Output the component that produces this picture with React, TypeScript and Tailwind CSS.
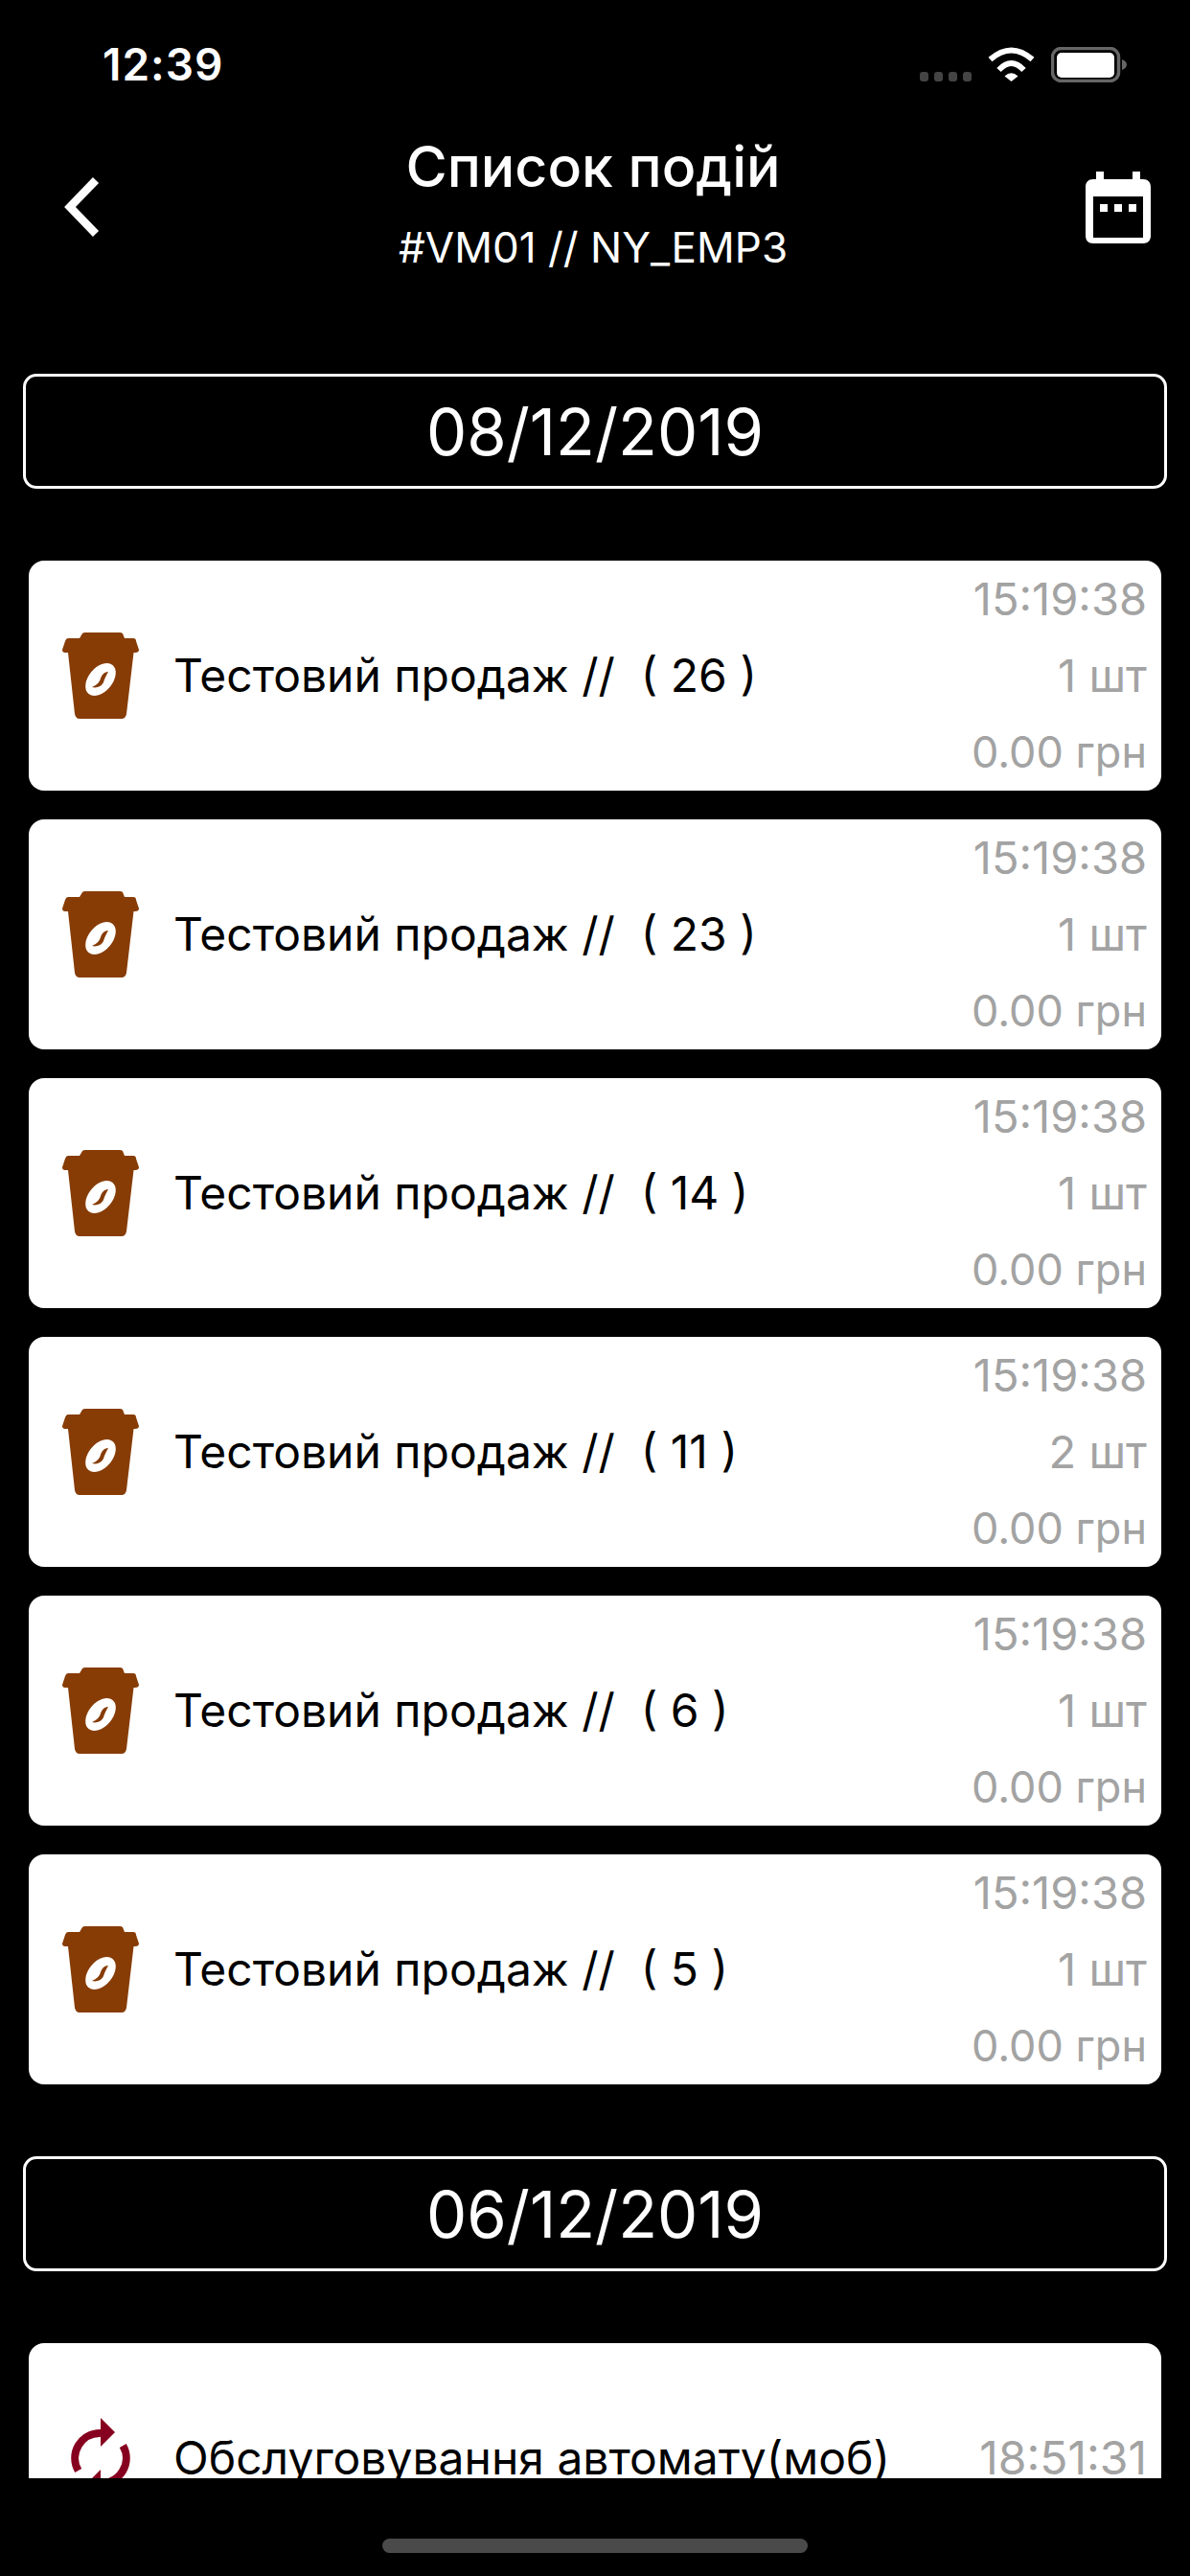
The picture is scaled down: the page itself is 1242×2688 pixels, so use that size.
const font = "font-['Inter','Noto_Sans',sans-serif]";

type Sale = { id: number; qty: number };

const sales: Sale[] = [
  { id: 26, qty: 1 },
  { id: 23, qty: 1 },
  { id: 14, qty: 1 },
  { id: 11, qty: 2 },
  { id: 6, qty: 1 },
  { id: 5, qty: 1 },
];

function WifiIcon() {
  return (
    <svg width="49" height="36" viewBox="0 0 49 36" fill="none">
      <path d="M2.5 13 Q24.5 -6 46.5 13" stroke="white" strokeWidth="6" />
      <path d="M11.5 24 Q24.5 10 37.5 24" stroke="white" strokeWidth="6" />
      <path d="M17.5 30.5 Q24.5 24 31.5 30.5 L24.5 36 Z" fill="white" />
    </svg>
  );
}

function BatteryIcon() {
  return (
    <svg width="80" height="37" viewBox="0 0 80 37" fill="none">
      <rect x="1.5" y="1.5" width="69" height="34" rx="9" stroke="#666666" strokeWidth="3.5" />
      <rect x="6" y="6" width="60" height="26" rx="5" fill="white" />
      <path d="M74 13 C77 14 79 16 79 18.5 C79 21 77 23 74 24 Z" fill="#666666" />
    </svg>
  );
}

function BackIcon() {
  return (
    <svg width="40" height="62" viewBox="0 0 40 62" fill="none">
      <path d="M35 3 L8 31 L35 59" stroke="white" strokeWidth="8.5" />
    </svg>
  );
}

function CalendarIcon() {
  return (
    <svg width="68" height="75" viewBox="0 0 68 75">
      <path
        fillRule="evenodd"
        fill="white"
        d="M11 0 H19 V8 H49 V0 H57 V8 H60 C65 8 68 11 68 16 V67 C68 72 65 75 60 75 H8 C3 75 0 72 0 67 V16 C0 11 3 8 8 8 H11 Z M8 26 V69 H60 V26 Z"
      />
      <rect x="15" y="34" width="8" height="8" fill="white" />
      <rect x="30" y="34" width="8" height="8" fill="white" />
      <rect x="45" y="34" width="8" height="8" fill="white" />
    </svg>
  );
}

function CupIcon() {
  return (
    <svg width="80" height="90" viewBox="0 0 80 90" className="shrink-0">
      <path
        fill="#873c06"
        d="M18 6 L21 1 Q22 0 24 0 H60 Q62 0 63 1 L65 6 H74 Q77 6 77 9 L80 18 Q80 21 76 21 H74.5 L67 85 Q66 90 62 90 H18 Q14 90 13 85 L6 21 H3 Q0 21 0 18 L3 9 Q4 6 6 6 Z"
      />
      <ellipse cx="40" cy="49" rx="19.5" ry="12.5" transform="rotate(-50 40 49)" fill="white" />
      <path
        fill="#873c06"
        d="M48 41 C43 41 41 45 40 48 C39 52 36 55 31 57 C36 58.5 41 56 43 52 C44 48 46 45 48 41 Z"
      />
    </svg>
  );
}

function ServiceIcon() {
  return (
    <svg width="80" height="90" viewBox="0 0 80 90" className="shrink-0" fill="none">
      <path d="M16.7 58 A26 26 0 0 1 40 19" stroke="#86001f" strokeWidth="8" />
      <path d="M40 3 L55 18 L40 33 Z" fill="#86001f" />
      <path d="M63.3 32 A26 26 0 0 1 40 71" stroke="#86001f" strokeWidth="8" />
      <path d="M40 87 L25 72 L40 57 Z" fill="#86001f" />
    </svg>
  );
}

function DateBox({ date }: { date: string }) {
  return (
    <div className="mx-[24px] flex h-[120px] items-center justify-center rounded-[14px] border-[3px] border-white text-[67px] leading-none text-white">
      {date}
    </div>
  );
}

function SaleCard({ id, qty }: Sale) {
  return (
    <div className="flex h-[240px] items-center rounded-[16px] bg-white pl-[35px] pr-[15px]">
      <CupIcon />
      <div className="ml-[36px] flex-1 whitespace-pre text-[48px] text-black">{`Тестовий продаж //  ( ${id} )`}</div>
      <div className="grid grid-rows-[80px_80px_80px] items-center text-right text-[47px] leading-none text-[#a3a3a3]">
        <div className="-mt-[2px]">15:19:38</div>
        <div className="-mt-[2px]">{qty} шт</div>
        <div className="-mt-[2px] text-[45px]">0.00 грн</div>
      </div>
    </div>
  );
}

export default function App() {
  return (
    <div className={`flex h-[2688px] w-[1242px] flex-col overflow-hidden bg-black ${font}`}>
      <div className="flex h-[132px] items-start pl-[107px] pr-[65px] pt-[49px]">
        <div className="text-[46px] font-semibold leading-[37px] tracking-[1px] text-white">12:39</div>
        <div className="ml-auto mt-[26px] flex gap-[6px]">
          <div className="h-[10px] w-[9px] rounded-[3px] bg-[#444444]" />
          <div className="h-[10px] w-[9px] rounded-[3px] bg-[#444444]" />
          <div className="h-[10px] w-[9px] rounded-[3px] bg-[#444444]" />
          <div className="h-[10px] w-[9px] rounded-[3px] bg-[#444444]" />
        </div>
        <div className="ml-[17px]">
          <WifiIcon />
        </div>
        <div className="ml-[17px]">
          <BatteryIcon />
        </div>
      </div>

      <div className="flex h-[168px] items-center justify-between pl-[65px] pr-[41px]">
        <BackIcon />
        <div className="text-center text-white">
          <div className="text-[59px] font-medium leading-[84px]">Список подій</div>
          <div className="text-[44px] leading-[84px]">#VM01 // NY_EMP3</div>
        </div>
        <CalendarIcon />
      </div>

      <div className="h-[2286px] overflow-hidden pt-[90px]">
        <DateBox date="08/12/2019" />
        <div className="mx-[30px] mt-[75px] flex flex-col gap-[30px]">
          {sales.map((sale) => (
            <SaleCard key={sale.id} id={sale.id} qty={sale.qty} />
          ))}
        </div>
        <div className="mt-[75px]">
          <DateBox date="06/12/2019" />
        </div>
        <div className="mx-[30px] mt-[75px] flex h-[240px] items-center rounded-[16px] bg-white pl-[35px] pr-[15px]">
          <ServiceIcon />
          <div className="ml-[36px] flex-1 text-[48px] text-black">Обслуговування автомату(моб)</div>
          <div className="text-[48px] text-[#a3a3a3]">18:51:31</div>
        </div>
      </div>

      <div className="flex justify-center pt-[63px]">
        <div className="h-[15px] w-[444px] rounded-full bg-[#4a4a4a]" />
      </div>
    </div>
  );
}
